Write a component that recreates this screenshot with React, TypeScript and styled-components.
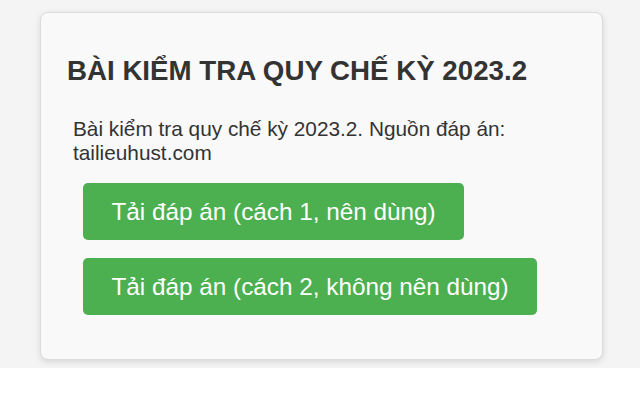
import styled, { createGlobalStyle } from 'styled-components';

const GlobalStyle = createGlobalStyle`
  html, body {
    margin: 0;
    padding: 0;
    background: #fff;
    font-family: 'Liberation Sans', Arial, sans-serif;
  }
`;

const Page = styled.div`
  background: #f4f4f4;
  padding: 12px 37px 8px 40px;
`;

const Card = styled.section`
  box-sizing: border-box;
  background: #f9f9f9;
  border: 1px solid #dcdcdc;
  border-radius: 8px;
  box-shadow: 0 2px 6px rgba(0, 0, 0, 0.12);
  padding: 42px 26px 44px 26px;
`;

const Title = styled.h2`
  margin: 0 0 30px;
  font-size: 27.7px;
  font-weight: bold;
  color: #333;
  line-height: 32px;
`;

const Intro = styled.p`
  margin: 0 0 18px 6px;
  font-size: 20.8px;
  line-height: 24px;
  color: #333;
`;

const Actions = styled.div`
  display: flex;
  flex-direction: column;
  align-items: flex-start;
  gap: 18px;
  margin-left: 16px;
`;

const DownloadButton = styled.a`
  display: inline-block;
  background: #4caf50;
  color: #fff;
  font-size: 24.3px;
  line-height: 28px;
  padding: 14.5px 28.5px;
  border-radius: 5px;
  text-decoration: none;
  cursor: pointer;
`;

const links = [
  'Tải đáp án (cách 1, nên dùng)',
  'Tải đáp án (cách 2, không nên dùng)',
];

export default function App() {
  return (
    <>
      <GlobalStyle />
      <Page>
        <Card>
          <Title>BÀI KIỂM TRA QUY CHẾ KỲ 2023.2</Title>
          <Intro>Bài kiểm tra quy chế kỳ 2023.2. Nguồn đáp án: tailieuhust.com</Intro>
          <Actions>
            {links.map((label, i) => (
              <DownloadButton key={i}>{label}</DownloadButton>
            ))}
          </Actions>
        </Card>
      </Page>
    </>
  );
}
